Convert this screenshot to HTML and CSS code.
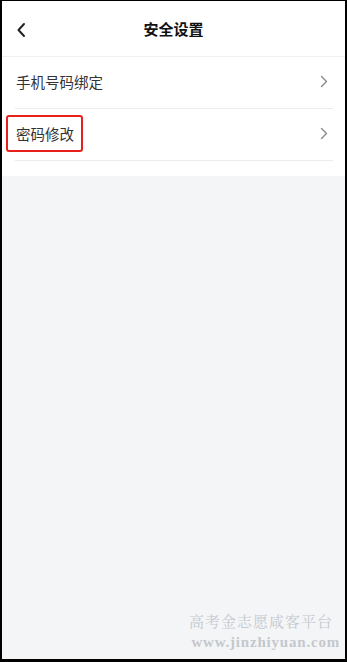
FILE: index.html
```html
<!DOCTYPE html>
<html lang="zh-CN">
<head>
    <meta charset="UTF-8">
    <meta name="viewport" content="width=device-width, initial-scale=1.0">
    <title>安全设置</title>
    <link rel="stylesheet" href="styles.css">
</head>
<body>
    <div class="frame">
        <header class="topbar">
            <span class="back">
                <svg width="10" height="16" viewBox="0 0 10 16"><path d="M8 2 L2.5 8 L8 14" fill="none" stroke="#222" stroke-width="2" stroke-linecap="round" stroke-linejoin="round"/></svg>
            </span>
            <h1>安全设置</h1>
        </header>

        <ul class="menu">
            <li class="menu-item">
                <span class="label">手机号码绑定</span>
                <svg class="arrow" width="8" height="13" viewBox="0 0 8 13"><path d="M1.5 1.5 L6.5 6.5 L1.5 11.5" fill="none" stroke="#888" stroke-width="1.4" stroke-linecap="round" stroke-linejoin="round"/></svg>
            </li>
            <li class="menu-item">
                <span class="label marked">密码修改</span>
                <svg class="arrow" width="8" height="13" viewBox="0 0 8 13"><path d="M1.5 1.5 L6.5 6.5 L1.5 11.5" fill="none" stroke="#888" stroke-width="1.4" stroke-linecap="round" stroke-linejoin="round"/></svg>
            </li>
        </ul>

        <div class="watermark">
            <p class="name">高考金志愿咸客平台</p>
            <p class="url">www.jinzhiyuan.com</p>
        </div>
    </div>
</body>
</html>
```

FILE: styles.css
```css
html, body {
    margin: 0;
    padding: 0;
}
body {
    font-family: "Noto Sans CJK SC", "Noto Sans", sans-serif;
    color: #333;
    background: #000;
}
.frame {
    box-sizing: border-box;
    width: 347px;
    height: 662px;
    border-style: solid;
    border-color: #000;
    border-width: 1px 2px 3px 2px;
    background: #f4f5f7;
    position: relative;
    overflow: hidden;
}
.topbar {
    height: 55px;
    background: #fff;
    border-bottom: 1px solid #efefef;
    display: flex;
    align-items: center;
    justify-content: center;
    position: relative;
}
.topbar h1 {
    margin: 0;
    font-size: 15px;
    font-weight: bold;
    color: #111;
}
.back {
    position: absolute;
    left: 14px;
    top: 21px;
    display: flex;
}
.menu {
    list-style: none;
    margin: 0;
    padding: 0 12px 15px 13px;
    background: #fff;
}
.menu-item {
    display: flex;
    align-items: center;
    justify-content: space-between;
    border-bottom: 1px solid #ececec;
    padding: 0 5px 2px 1px;
    box-sizing: border-box;
    height: 52px;
    font-size: 14.5px;
    color: #333;
}
.label {
    position: relative;
}
.marked::after {
    content: "";
    position: absolute;
    left: -10px;
    right: -9px;
    top: -8px;
    bottom: -8px;
    border: 2px solid #e8201c;
    border-radius: 3px;
}
.watermark {
    position: absolute;
    right: 5px;
    bottom: 7px;
    text-align: right;
    font-family: "Liberation Serif", "Noto Serif CJK SC", serif;
    color: #c4c8cd;
}
.watermark p {
    margin: 0;
    line-height: 20px;
}
.watermark .name {
    font-size: 15px;
    letter-spacing: 1px;
    padding-right: 7px;
}
.watermark .url {
    font-size: 15px;
    font-weight: bold;
    letter-spacing: 0.8px;
}
```
